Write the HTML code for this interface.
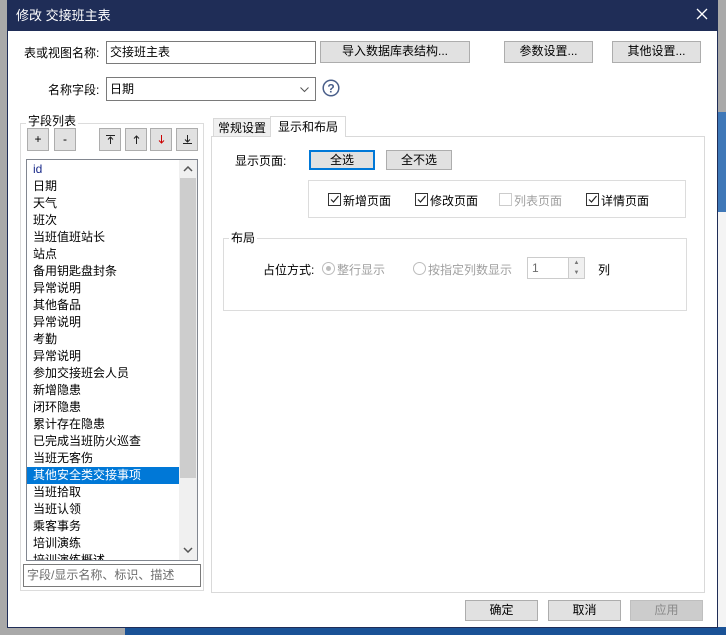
<!DOCTYPE html>
<html><head><meta charset="utf-8"><style>
*{box-sizing:border-box;margin:0;padding:0}
body{width:726px;height:635px;position:relative;overflow:hidden;background:#fff;font-family:"Liberation Sans","Noto Sans CJK SC","WenQuanYi Zen Hei",sans-serif;font-size:12px;color:#000}
.a{position:absolute}
.btn{position:absolute;background:#e1e1e1;border:1px solid #adadad;text-align:center;line-height:19px;font-size:12px}
.btn svg{position:absolute;left:5px;top:5px}
.gb{position:absolute;border:1px solid #dcdcdc}
.lbl{position:absolute;background:#fff;padding:0 2px;line-height:14px}
.inp{position:absolute;border:1px solid #7a7a7a;background:#fff;padding-left:3px}
.cb{position:absolute;width:13px;height:13px;border:1px solid #333;background:#fff}
.cb svg{position:absolute;left:0;top:0}
.item{height:17px;line-height:17px;padding-left:6px}
.rad{position:absolute;width:13px;height:13px;border-radius:50%;border:1px solid #bcbcbc;background:#fff}
</style></head><body>
<div class="a" style="left:0;top:0;width:7px;height:635px;background:#a9a9a9"></div>
<div class="a" style="left:718px;top:0;width:8px;height:112px;background:#a9a9a9"></div>
<div class="a" style="left:718px;top:112px;width:8px;height:100px;background:#3f78b8"></div>
<div class="a" style="left:718px;top:212px;width:8px;height:420px;background:#f4f4f4"></div>
<div class="a" style="left:0;top:627px;width:125px;height:8px;background:#a9a9a9"></div>
<div class="a" style="left:125px;top:627px;width:601px;height:8px;background:#1a5296"></div>
<div class="a" style="left:7px;top:0;width:711px;height:628px;border:1px solid #1f2d57;background:#fff"></div>
<div class="a" style="left:7px;top:0;width:711px;height:31px;background:#1f2d57;color:#fff;font-size:13px;line-height:31px;padding-left:9px">修改 交接班主表</div>
<svg class="a" style="left:696px;top:8px" width="12" height="12"><path d="M1 1L11 11M11 1L1 11" stroke="#fff" stroke-width="1.3"/></svg>

<div class="a" style="left:24px;top:44px">表或视图名称:</div>
<div class="inp" style="left:106px;top:41px;width:210px;height:23px;line-height:21px">交接班主表</div>
<div class="btn" style="left:320px;top:41px;width:150px;height:22px">导入数据库表结构...</div>
<div class="btn" style="left:504px;top:41px;width:89px;height:22px">参数设置...</div>
<div class="btn" style="left:612px;top:41px;width:89px;height:22px">其他设置...</div>

<div class="a" style="left:48px;top:81px">名称字段:</div>
<div class="inp" style="left:106px;top:77px;width:210px;height:24px;line-height:22px">日期
<svg style="position:absolute;right:6px;top:9px" width="9" height="6"><path d="M0.5 0.5L4.5 4.5L8.5 0.5" stroke="#555" fill="none"/></svg></div>
<svg class="a" style="left:322px;top:79px" width="18" height="18"><circle cx="9" cy="9" r="7.8" stroke="#4a5f8a" stroke-width="1.5" fill="none"/><text x="9" y="13.5" text-anchor="middle" font-size="12" font-weight="bold" fill="#4a5f8a" font-family="Liberation Sans">?</text></svg>

<div class="gb" style="left:20px;top:123px;width:184px;height:468px"></div>
<div class="lbl" style="left:26px;top:114px">字段列表</div>
<div class="btn" style="left:27px;top:128px;width:22px;height:23px;line-height:21px">+</div>
<div class="btn" style="left:54px;top:128px;width:22px;height:23px;line-height:21px">-</div>
<div class="btn" style="left:99px;top:128px;width:22px;height:23px"><svg width="11" height="11"><path d="M1 1.5H10M5.5 3V10M3 5.5L5.5 3L8 5.5" stroke="#222" fill="none"/></svg></div>
<div class="btn" style="left:125px;top:128px;width:22px;height:23px"><svg width="11" height="11"><path d="M5.5 2V10M3 4.5L5.5 2L8 4.5" stroke="#222" fill="none"/></svg></div>
<div class="btn" style="left:150px;top:128px;width:22px;height:23px"><svg width="11" height="11"><path d="M5.5 1V9M3 6.5L5.5 9L8 6.5" stroke="#c00" fill="none"/></svg></div>
<div class="btn" style="left:176px;top:128px;width:22px;height:23px"><svg width="11" height="11"><path d="M1 9.5H10M5.5 1V8M3 5.5L5.5 8L8 5.5" stroke="#222" fill="none"/></svg></div>

<div class="a" style="left:26px;top:159px;width:172px;height:402px;border:1px solid #828790;overflow:hidden;background:#fff">
<div style="position:absolute;left:0;top:1px;width:152px">
<div class="item" style="color:#1a2b8a">id</div>
<div class="item">日期</div><div class="item">天气</div><div class="item">班次</div><div class="item">当班值班站长</div><div class="item">站点</div><div class="item">备用钥匙盘封条</div><div class="item">异常说明</div><div class="item">其他备品</div><div class="item">异常说明</div><div class="item">考勤</div><div class="item">异常说明</div><div class="item">参加交接班会人员</div><div class="item">新增隐患</div><div class="item">闭环隐患</div><div class="item">累计存在隐患</div><div class="item">已完成当班防火巡查</div><div class="item">当班无客伤</div>
<div class="item" style="background:#0078d7;color:#fff">其他安全类交接事项</div>
<div class="item">当班拾取</div><div class="item">当班认领</div><div class="item">乘客事务</div><div class="item">培训演练</div><div class="item">培训演练概述</div>
</div>
<div style="position:absolute;left:152px;top:0;width:18px;height:400px;background:#f0f0f0"></div>
<div style="position:absolute;left:153px;top:18px;width:16px;height:300px;background:#cdcdcd"></div>
<svg style="position:absolute;left:156px;top:6px" width="10" height="6"><path d="M1 5L5 1L9 5" stroke="#555" stroke-width="1.5" fill="none"/></svg>
<svg style="position:absolute;left:156px;top:387px" width="10" height="6"><path d="M1 1L5 5L9 1" stroke="#555" stroke-width="1.5" fill="none"/></svg>
</div>
<div class="inp" style="left:23px;top:564px;width:178px;height:23px;line-height:21px;color:#6d6d6d">字段/显示名称、标识、描述</div>

<div class="a" style="left:211px;top:136px;width:494px;height:457px;border:1px solid #d9d9d9;background:#fff"></div>
<div class="a" style="left:213px;top:118px;width:58px;height:19px;border:1px solid #d9d9d9;background:#f0f0f0;text-align:center;line-height:18px">常规设置</div>
<div class="a" style="left:270px;top:116px;width:76px;height:21px;border:1px solid #d9d9d9;border-bottom:none;background:#fff;text-align:center;line-height:20px">显示和布局</div>

<div class="a" style="left:235px;top:152px">显示页面:</div>
<div class="btn" style="left:309px;top:150px;width:66px;height:20px;border:2px solid #0078d7;line-height:16px">全选</div>
<div class="btn" style="left:386px;top:150px;width:66px;height:20px;line-height:18px">全不选</div>

<div class="gb" style="left:308px;top:180px;width:378px;height:38px"></div>
<div class="cb" style="left:328px;top:193px"><svg width="11" height="11"><path d="M2 5.5 L4.5 8 L9.5 2" stroke="#222" fill="none" stroke-width="1.2"/></svg></div>
<div class="a" style="left:343px;top:192px">新增页面</div>
<div class="cb" style="left:415px;top:193px"><svg width="11" height="11"><path d="M2 5.5 L4.5 8 L9.5 2" stroke="#222" fill="none" stroke-width="1.2"/></svg></div>
<div class="a" style="left:430px;top:192px">修改页面</div>
<div class="cb" style="left:499px;top:193px;border-color:#ccc"></div>
<div class="a" style="left:514px;top:192px;color:#a0a0a0">列表页面</div>
<div class="cb" style="left:586px;top:193px"><svg width="11" height="11"><path d="M2 5.5 L4.5 8 L9.5 2" stroke="#222" fill="none" stroke-width="1.2"/></svg></div>
<div class="a" style="left:601px;top:192px">详情页面</div>

<div class="gb" style="left:223px;top:238px;width:464px;height:73px"></div>
<div class="lbl" style="left:229px;top:231px">布局</div>
<div class="a" style="left:263px;top:261px">占位方式:</div>
<div class="rad" style="left:322px;top:262px"><div style="position:absolute;left:3px;top:3px;width:5px;height:5px;border-radius:50%;background:#bcbcbc"></div></div>
<div class="a" style="left:337px;top:261px;color:#a0a0a0">整行显示</div>
<div class="rad" style="left:413px;top:262px"></div>
<div class="a" style="left:428px;top:261px;color:#a0a0a0">按指定列数显示</div>
<div class="a" style="left:527px;top:257px;width:58px;height:22px;border:1px solid #ccc;background:#fff;padding-left:4px;line-height:20px;color:#6d6d6d">1
<div style="position:absolute;right:0;top:0;width:16px;height:20px;background:#f0f0f0;border-left:1px solid #ccc;font-size:6px;line-height:10px;text-align:center;color:#777">▲<br>▼</div></div>
<div class="a" style="left:598px;top:261px">列</div>

<div class="btn" style="left:465px;top:600px;width:73px;height:21px">确定</div>
<div class="btn" style="left:548px;top:600px;width:73px;height:21px">取消</div>
<div class="btn" style="left:630px;top:600px;width:73px;height:21px;background:#cccccc;border-color:#bfbfbf;color:#8a8a8a">应用</div>
</body></html>
